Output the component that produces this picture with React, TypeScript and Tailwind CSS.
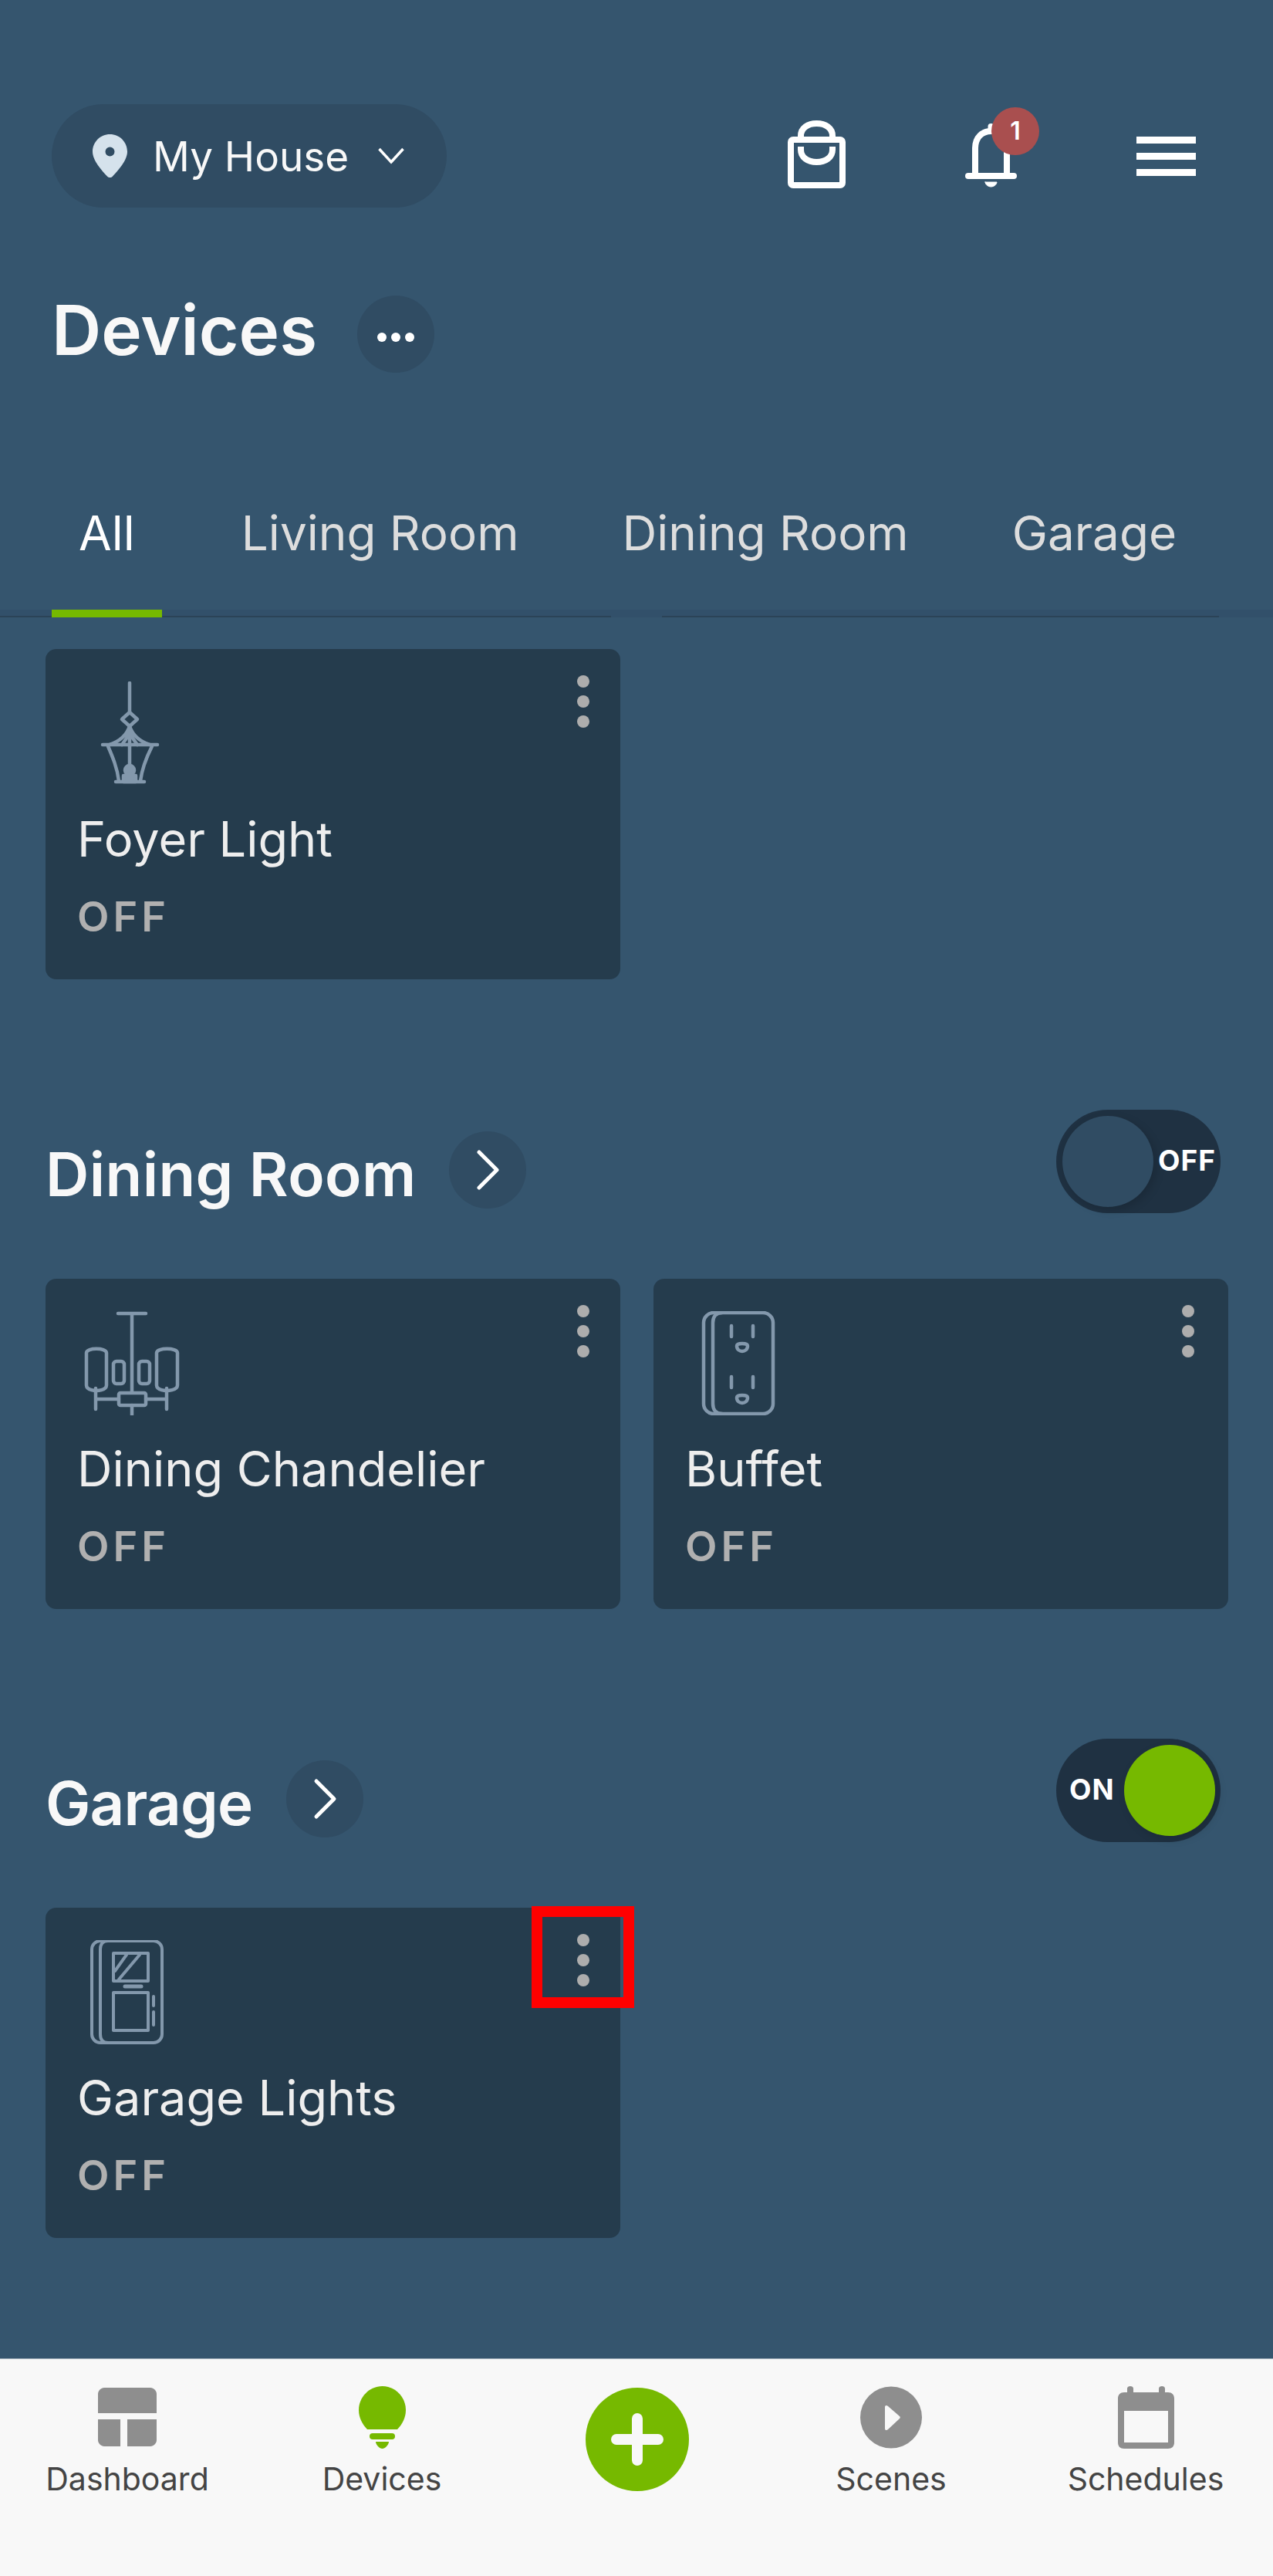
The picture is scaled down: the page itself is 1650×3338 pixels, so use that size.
import { ReactNode } from "react";

function FoyerIcon() {
  return (
    <svg width="135" height="135" viewBox="0 0 135 135" fill="none" stroke="#8398ac" strokeWidth="4.5" strokeLinecap="round" strokeLinejoin="round">
      <path d="M64 2V40" />
      <path d="M64 40L74 49L64 58L54 49Z" />
      <path d="M64 58V128" />
      <path d="M64 58C60 70 50 78 38 82M64 58C68 70 78 78 90 82M64 68L54 82M64 68L74 82" />
      <path d="M29 82H100" />
      <path d="M36 84C42 98 48 112 50 129M93 84C86 98 80 112 78 129" />
      <path d="M46 130H83" />
      <circle cx="64" cy="115" r="6" fill="#8398ac" />
      <rect x="56" y="122" width="16" height="8" fill="#8398ac" />
    </svg>
  );
}

function ChandelierIcon() {
  return (
    <svg width="135" height="135" viewBox="0 0 135 135" fill="none" stroke="#8398ac" strokeWidth="4.5" strokeLinecap="round" strokeLinejoin="round">
      <path d="M49 3H85M67 3V105" />
      <path d="M8 54C8 47 34 47 34 54V96C34 103 21 103 21 103C21 103 8 103 8 96Z" />
      <path d="M99 54C99 47 126 47 126 54V96C126 103 112 103 112 103C112 103 99 103 99 96Z" />
      <rect x="43" y="65" width="14" height="29" rx="4" />
      <rect x="76" y="65" width="14" height="29" rx="4" />
      <rect x="50" y="106" width="35" height="16" rx="2" />
      <path d="M20 114H50M85 114H112M20 100V127M112 100V127M67 122V134" />
    </svg>
  );
}

function OutletIcon() {
  return (
    <svg width="135" height="135" viewBox="0 0 135 135" fill="none" stroke="#8398ac" strokeWidth="4.5" strokeLinecap="round" strokeLinejoin="round">
      <rect x="20" y="2" width="90" height="131" rx="13" />
      <path d="M44 2C36 2 32 7 32 15V120C32 128 36 133 44 133" />
      <path d="M56 19V33M84 19V33M56 85V99M84 85V99" />
      <path d="M63 45C63 41 77 41 77 45C77 50 73 52 70 52C67 52 63 50 63 45Z" />
      <path d="M63 112C63 108 77 108 77 112C77 117 73 119 70 119C67 119 63 117 63 112Z" />
    </svg>
  );
}

function SwitchIcon() {
  return (
    <svg width="135" height="135" viewBox="0 0 135 135" fill="none" stroke="#8398ac" strokeWidth="4" strokeLinecap="round" strokeLinejoin="round">
      <rect x="15" y="1" width="91" height="132" rx="11" />
      <path d="M36 1C29 1 26 5 26 12V122C26 129 29 133 36 133" />
      <rect x="43" y="17" width="45" height="36" />
      <path d="M45 40L60 19M50 51L77 19" />
      <path d="M58 60H79" strokeWidth="5" />
      <rect x="43" y="68" width="45" height="49" />
      <path d="M95 73V85M95 93V110" strokeWidth="4" />
    </svg>
  );
}

function Kebab() {
  return (
    <div className="flex flex-col gap-[10px]">
      <span className="h-4 w-4 rounded-full bg-[#adadad]" />
      <span className="h-4 w-4 rounded-full bg-[#adadad]" />
      <span className="h-4 w-4 rounded-full bg-[#adadad]" />
    </div>
  );
}

function DeviceCard({ name, icon, menuClass = "right-[40px]" }: { name: string; icon: ReactNode; menuClass?: string }) {
  return (
    <div className="relative h-[428px] rounded-[14px] bg-[#253c4d] pl-[41px] pt-[42px]">
      <div className={`absolute top-[34px] ${menuClass}`}>
        <Kebab />
      </div>
      <div className="ml-[4px] h-[135px]">{icon}</div>
      <div className="mt-[27px] h-[84px] text-[63px] leading-[84px] text-[#eeeeee]">{name}</div>
      <div className="mt-[27px] text-[54px] leading-[64px] font-semibold tracking-[5px] text-[#b0b0b0]">OFF</div>
    </div>
  );
}

function Toggle({ on }: { on: boolean }) {
  return (
    <div className={`flex h-[134px] w-[213px] items-center rounded-full bg-[#1f3142] ${on ? "justify-end pl-[17px] pr-[7px]" : "pl-[8px]"}`}>
      {on && <span className="mr-auto pb-[2px] text-[37px] font-bold tracking-[1px] text-white">ON</span>}
      <span className={`h-[118px] w-[118px] rounded-full shadow-[4px_4px_12px_rgba(0,0,0,0.15)] ${on ? "bg-[#76b900]" : "bg-[#304c63]"}`} />
      {!on && <span className="ml-[6px] pb-[2px] text-[37px] font-bold tracking-[1px] text-white">OFF</span>}
    </div>
  );
}

function RoomHeader({ title, on, titleClass }: { title: string; on: boolean; titleClass: string }) {
  return (
    <div className="flex items-start justify-between pr-[10px]">
      <div className="flex items-start">
        <h2 className={`mt-[33px] text-[78px] leading-[102px] font-semibold text-[#f8f8f8] ${titleClass}`}>{title}</h2>
        <div className="mt-[28px] flex h-[100px] w-[100px] items-center justify-center rounded-full bg-[#304c63]">
          <svg width="34" height="54" viewBox="0 0 34 54" fill="none" stroke="#ffffff" strokeWidth="5" strokeLinecap="round" strokeLinejoin="round">
            <path d="M6 4L29 27L6 50" />
          </svg>
        </div>
      </div>
      <Toggle on={on} />
    </div>
  );
}

function NavItem({ label, icon }: { label: string; icon: ReactNode }) {
  return (
    <div className="flex w-[330px] flex-col items-center">
      <div className="flex h-[90px] items-center justify-center">{icon}</div>
      <span className="mt-[10px] text-[41px] leading-[50px] text-[#444444]">{label}</span>
    </div>
  );
}

export default function App() {
  return (
    <div className="relative flex h-[3338px] w-[1650px] flex-col overflow-hidden bg-[#35556e] font-['Inter',sans-serif]">
      {/* top bar */}
      <div className="mt-[135px] flex items-start pl-[67px]">
        <div className="flex h-[134px] w-[512px] items-center rounded-full bg-[#304c63] pl-[53px]">
          <svg width="45" height="56" viewBox="0 0 45 56">
            <path fillRule="evenodd" fill="#d5e2ec" d="M22.5 0C10 0 0 10 0 22.500C0 34 12 47 19 54.500C21 56.500 24 56.500 26 54.500C33 47 45 34 45 22.500C45 10 35 0 22.500 0ZM22.500 16.500A6 6 0 1 1 22.500 28.500A6 6 0 1 1 22.500 16.500Z" />
          </svg>
          <span className="ml-[33px] pt-[3px] text-[53px] leading-none text-[#f8f8f8]">My House</span>
          <svg className="ml-[38px]" width="34" height="22" viewBox="0 0 34 22" fill="none" stroke="#ffffff" strokeWidth="3.500">
            <path d="M1.500 2L17 19L32.500 2" />
          </svg>
        </div>
        <svg className="ml-[442px] mt-[21px]" width="75" height="88" viewBox="0 0 75 88" fill="none" stroke="#ffffff" strokeWidth="8" strokeLinejoin="round">
          <rect x="4" y="25" width="67" height="59" rx="3" />
          <path d="M17 25V20C17 10 26 4 37.500 4C49 4 58 10 58 20V25" />
          <path d="M17 34V38C17 48 26 54 37.500 54C49 54 58 48 58 38V34" />
        </svg>
        <div className="relative ml-[155px] mt-[25px] h-[84px] w-[67px]">
          <svg width="67" height="84" viewBox="0 0 67 84" fill="none" stroke="#ffffff" strokeWidth="8" strokeLinecap="round">
            <path d="M33.500 4V10" />
            <path d="M13 66V32C13 18 22 10 33.500 10C45 10 54 18 54 32V66" />
            <path d="M4 68H63" />
            <path d="M26 76H41C41 79 37 82 33.500 82C30 82 26 79 26 76Z" fill="#ffffff" strokeWidth="1" />
          </svg>
          <div className="absolute -top-[21px] left-[34px] flex h-[62px] w-[62px] items-center justify-center rounded-full bg-[#a94f4f] text-[32px] font-semibold text-white">1</div>
        </div>
        <div className="ml-[155px] mt-[42px] flex w-[77px] flex-col gap-[12px]">
          <span className="h-[9px] bg-white" />
          <span className="h-[9px] bg-white" />
          <span className="h-[9px] bg-white" />
        </div>
      </div>

      {/* title */}
      <div className="mt-[114px] flex h-[100px] items-center pl-[67px]">
        <h1 className="pb-[12px] text-[89px] leading-none font-semibold text-[#f8f8f8]">Devices</h1>
        <div className="ml-[52px] flex h-[100px] w-[100px] items-center justify-center gap-[6px] rounded-full bg-[#304c63] pt-[8px]">
          <span className="h-[12px] w-[12px] rounded-full bg-white" />
          <span className="h-[12px] w-[12px] rounded-full bg-white" />
          <span className="h-[12px] w-[12px] rounded-full bg-white" />
        </div>
      </div>

      {/* tabs */}
      <div className="relative mt-[157px] flex h-[160px] gap-[64px] border-b-[10px] border-[#32506a] pl-[67px]">
        <span className="absolute -bottom-[10px] left-0 h-[2px] w-[792px] bg-[#2b4357]" />
        <span className="absolute -bottom-[10px] left-[858px] h-[2px] w-[722px] bg-[#2b4357]" />
        <div className="relative -mb-[10px] h-[160px] border-b-[10px] border-[#76b900] px-[35px] pt-[15px] text-[62px] leading-[72px] text-white">All</div>
        <div className="ml-[4px] px-[35px] pt-[15px] text-[62px] leading-[72px] text-[#dddddd]">Living Room</div>
        <div className="px-[35px] pt-[15px] text-[62px] leading-[72px] text-[#dddddd]">Dining Room</div>
        <div className="px-[35px] pt-[15px] text-[62px] leading-[72px] text-[#dddddd]">Garage</div>
      </div>

      {/* rooms */}
      <div className="mt-[41px] flex flex-col pl-[59px] pr-[58px]">
        <div className="grid grid-cols-2 gap-[43px]">
          <DeviceCard name="Foyer Light" icon={<FoyerIcon />} />
        </div>
        <div className="mt-[169px]">
          <RoomHeader title="Dining Room" on={false} titleClass="mr-[42px] tracking-[0.4px]" />
        </div>
        <div className="mt-[84px] grid grid-cols-2 gap-[43px]">
          <DeviceCard name="Dining Chandelier" icon={<ChandelierIcon />} />
          <DeviceCard name="Buffet" icon={<OutletIcon />} menuClass="right-[44px]" />
        </div>
        <div className="mt-[168px]">
          <RoomHeader title="Garage" on={true} titleClass="mr-[44px] tracking-[-0.8px]" />
        </div>
        <div className="mt-[84px] grid grid-cols-2 gap-[43px]">
          <DeviceCard name="Garage Lights" icon={<SwitchIcon />} />
        </div>
      </div>

      {/* highlighted menu button */}
      <div className="absolute left-[689px] top-[2470px] h-[132px] w-[133px] border-[14px] border-[#ff0000]" />

      {/* bottom nav */}
      <div className="mt-auto flex h-[282px] items-start border-t border-[#a9b5bf] bg-[#f8f8f8] pt-[30px]">
        <NavItem
          label="Dashboard"
          icon={
            <svg width="76" height="76" viewBox="0 0 76 76" fill="#8e8e8e">
              <path d="M8 0H68C72 0 76 4 76 8V33H0V8C0 4 4 0 8 0Z" />
              <path d="M0 41H29V76H8C4 76 0 72 0 68Z" />
              <path d="M38 41H76V68C76 72 72 76 68 76H38Z" />
            </svg>
          }
        />
        <NavItem
          label="Devices"
          icon={
            <svg width="61" height="81" viewBox="0 0 61 81" fill="#76b900">
              <path d="M30.500 0C47 0 61 14 61 31C61 41 56 50 50 56H11C5 50 0 41 0 31C0 14 14 0 30.500 0Z" />
              <rect x="14" y="61" width="33" height="8" rx="4" />
              <path d="M22 72H39C39 76 34 81 30.500 81C27 81 22 76 22 72Z" />
            </svg>
          }
        />
        <div className="flex w-[330px] justify-center pl-[2px] pt-[7px]">
          <div className="flex h-[134px] w-[134px] items-center justify-center rounded-full bg-[#76b900]">
            <svg width="68" height="68" viewBox="0 0 68 68" fill="none" stroke="#f8f8f8" strokeWidth="14" strokeLinecap="round">
              <path d="M7 34H61M34 7V61" />
            </svg>
          </div>
        </div>
        <NavItem
          label="Scenes"
          icon={
            <svg width="80" height="81" viewBox="0 0 80 81">
              <circle cx="40" cy="40.500" r="40" fill="#8e8e8e" />
              <path d="M32 27C32 25 34 24 36 26L51 39C52 40 52 41 51 42L36 56C34 58 32 57 32 55Z" fill="#f8f8f8" />
            </svg>
          }
        />
        <NavItem
          label="Schedules"
          icon={
            <svg width="73" height="81" viewBox="0 0 73 81">
              <path fillRule="evenodd" fill="#8e8e8e" d="M8 8H12V3C12 -1 20 -1 20 3V8H53V3C53 -1 61 -1 61 3V8H65C70 8 73 11 73 16V73C73 78 70 81 65 81H8C3 81 0 78 0 73V16C0 11 3 8 8 8ZM8 32V73H65V32Z" />
            </svg>
          }
        />
      </div>
    </div>
  );
}
